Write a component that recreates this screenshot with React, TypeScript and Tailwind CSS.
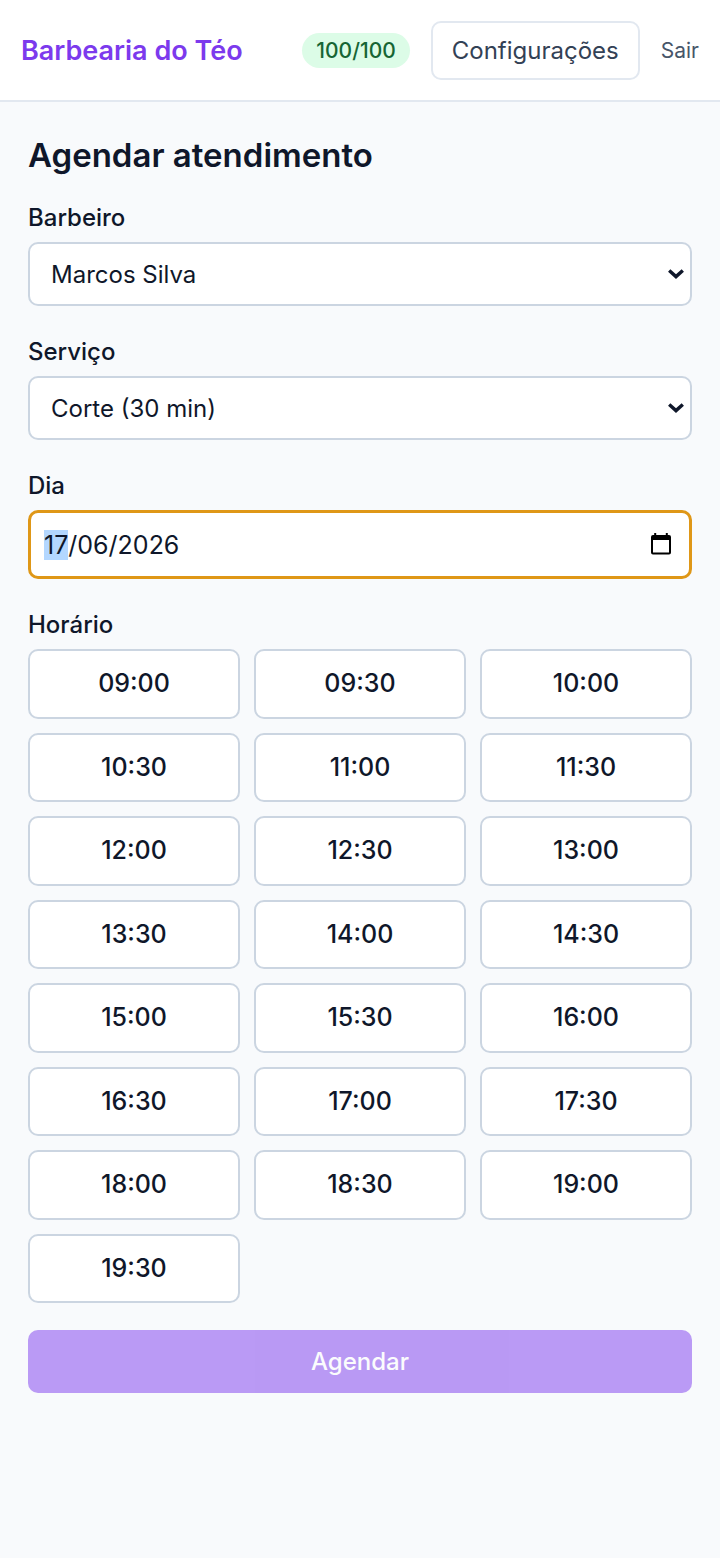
import { useEffect, useRef, useState } from "react";

const BARBERS = ["Marcos Silva"];
const SERVICES = ["Corte (30 min)"];

const SLOTS = [
    "09:00", "09:30", "10:00",
    "10:30", "11:00", "11:30",
    "12:00", "12:30", "13:00",
    "13:30", "14:00", "14:30",
    "15:00", "15:30", "16:00",
    "16:30", "17:00", "17:30",
    "18:00", "18:30", "19:00",
    "19:30",
];

function Header() {
    return (
        <header className="border-b-2 border-[#e2e8f0] bg-white">
            <div className="flex items-center justify-between px-[21px] pt-[21px] pb-[20px]">
                <a href="#" className="text-[27px] leading-[37px] font-semibold text-[#7c3aed]">
                    Barbearia do Téo
                </a>
                <div className="flex items-center gap-[21px]">
                    <span className="rounded-full bg-[#dcfce7] px-[14px] text-[21px] leading-[35px] font-medium text-[#166534]">
                        100/100
                    </span>
                    <a
                        href="#"
                        className="rounded-[10px] border-2 border-[#e2e8f0] px-[19px] py-[9px] text-[24px] leading-[37px] text-[#334155]"
                    >
                        Configurações
                    </a>
                    <button type="button" className="text-[21px] leading-[37px] text-[#475569]">
                        Sair
                    </button>
                </div>
            </div>
        </header>
    );
}

function SelectField({ id, label, options }: { id: string; label: string; options: string[] }) {
    return (
        <div>
            <label htmlFor={id} className="block text-[24px] leading-[38px] font-medium">
                {label}
            </label>
            <div className="relative mt-[5px]">
                <select
                    id={id}
                    className="block h-[64px] w-full appearance-none rounded-[10px] border-2 border-[#cbd5e1] bg-white px-[21px] pt-[2px] text-[24px]"
                >
                    {options.map((option) => (
                        <option key={option}>{option}</option>
                    ))}
                </select>
                <svg
                    viewBox="0 0 16 10"
                    className="pointer-events-none absolute top-[27px] right-[8px] h-[10px] w-[16px]"
                    fill="none"
                    stroke="currentColor"
                    strokeWidth="3.4"
                >
                    <path d="M1.2 1.4 L8 7.600 L14.800 1.4" />
                </svg>
            </div>
        </div>
    );
}

function DateField() {
    const inputRef = useRef<HTMLInputElement>(null);
    const [date, setDate] = useState("17/06/2026");

    useEffect(() => {
        // Start with the day part selected
        inputRef.current?.focus();
        inputRef.current?.setSelectionRange(0, 2);
    }, []);

    return (
        <div>
            <label htmlFor="date" className="block text-[24px] leading-[38px] font-medium">
                Dia
            </label>
            <div className="relative mt-[5px]">
                <input
                    id="date"
                    ref={inputRef}
                    type="text"
                    inputMode="numeric"
                    value={date}
                    onChange={(e) => setDate(e.target.value)}
                    className="block h-[69px] w-full rounded-[10px] border-[3px] border-[#df9717] bg-white px-[13px] text-[25px] outline-none selection:bg-[#b3d7ff] selection:text-[#0f172a]"
                />
                <svg
                    viewBox="0 0 20 22"
                    className="pointer-events-none absolute top-[23px] right-[21px] h-[22px] w-[20px] text-black"
                    fill="currentColor"
                >
                    <path
                        fillRule="evenodd"
                        d="M3.2 0h2v2h9.6V0h2v2H18a2 2 0 0 1 2 2v15.500a2 2 0 0 1-2 2H2a2 2 0 0 1-2-2V4a2 2 0 0 1 2-2h1.200zM2 7v12.500h16V7z"
                    />
                </svg>
            </div>
        </div>
    );
}

export default function App() {
    const [slot, setSlot] = useState<string | null>(null);

    return (
        <div className="min-h-screen bg-[#f8fafc] font-['Inter','Liberation_Sans',sans-serif] text-[#0f172a]">
            <Header />
            <main className="px-[28px] pt-[28px] pb-[56px]">
                <h1 className="text-[33px] leading-[50px] font-semibold">Agendar atendimento</h1>
                <form className="mt-[19px] flex flex-col gap-[27px]" onSubmit={(e) => e.preventDefault()}>
                    <SelectField id="barber" label="Barbeiro" options={BARBERS} />
                    <SelectField id="service" label="Serviço" options={SERVICES} />
                    <DateField />
                    <fieldset>
                        <legend className="text-[24px] leading-[38px] font-medium">Horário</legend>
                        <div className="mt-[5px] grid grid-cols-3 gap-[14px]">
                            {SLOTS.map((time) => (
                                <button
                                    key={time}
                                    type="button"
                                    aria-pressed={slot === time}
                                    onClick={() => setSlot(time)}
                                    className="rounded-[10px] border-2 border-[#cbd5e1] bg-white py-[14px] text-[25px] leading-normal font-medium aria-pressed:border-[#7c3aed]"
                                >
                                    {time}
                                </button>
                            ))}
                        </div>
                    </fieldset>
                    <button
                        type="submit"
                        disabled={!slot}
                        className="h-[63px] rounded-[10px] bg-[#7c3aed] text-[24px] font-medium text-white disabled:opacity-50"
                    >
                        Agendar
                    </button>
                </form>
            </main>
        </div>
    );
}
